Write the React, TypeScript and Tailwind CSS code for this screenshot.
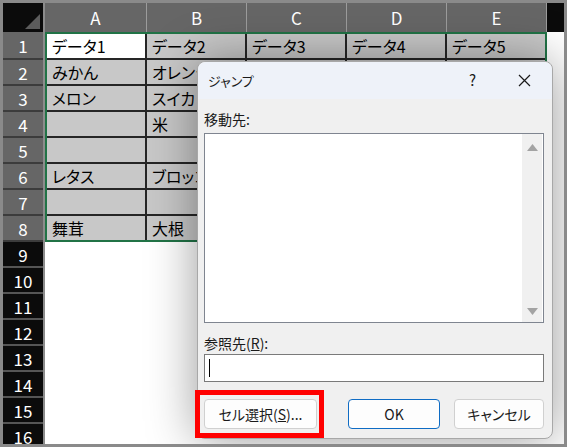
import React from 'react'

const cols = ['A', 'B', 'C', 'D', 'E']
const colWidths = ['w-[102px]', 'w-[100px]', 'w-[100px]', 'w-[100px]', 'w-[100px]']
const cellWidths = ['w-[100px]', 'w-[100px]', 'w-[100px]', 'w-[100px]', 'w-[98px]']

const data: string[][] = [
    ['データ1', 'データ2', 'データ3', 'データ4', 'データ5'],
    ['みかん', 'オレンジ', '', '', ''],
    ['メロン', 'スイカ', '', '', ''],
    ['', '米', '', '', ''],
    ['', '', '', '', ''],
    ['レタス', 'ブロッコリー', '', '', ''],
    ['', '', '', '', ''],
    ['舞茸', '大根', '', '', ''],
]

const rowHeaderHeights = ['h-[28px]', 'h-[26px]', 'h-[26px]', 'h-[26px]', 'h-[26px]', 'h-[26px]', 'h-[26px]', 'h-[26px]']

function Arrow({ down }: { down?: boolean }) {
    return (
        <svg width="11" height="7" viewBox="0 0 11 7">
            {down ? <polygon points="0,0 11,0 5.5,7" fill="#a3a3a3" /> : <polygon points="0,7 11,7 5.5,0" fill="#a3a3a3" />}
        </svg>
    )
}

export default function App() {
    return (
        <div className="w-[567px] h-[447px] bg-[#8a8a8a] p-[3px] font-['Noto_Sans_CJK_JP','Noto_Sans',sans-serif] [font-feature-settings:'palt']">
            <div className="relative w-full h-full overflow-hidden bg-white">
                {/* column headers */}
                <div className="flex h-[29px] bg-[#0b0b0b]">
                    <div className="w-[40px] h-full flex items-end justify-end p-[3px]">
                        <svg width="15" height="15" viewBox="0 0 15 15">
                            <polygon points="15,0 15,15 0,15" fill="#5c5c5c" />
                        </svg>
                    </div>
                    <div className="w-[2px] h-full bg-[#8c8c8c]" />
                    {cols.map((c, i) => (
                        <div
                            key={c}
                            className={`${colWidths[i]} h-full bg-[#666666] border-r border-[#9c9c9c] flex items-center justify-center text-white text-[17px] leading-none`}
                        >
                            {c}
                        </div>
                    ))}
                </div>

                <div className="flex">
                    {/* row headers */}
                    <div className="w-[42px] flex flex-col border-r-2 border-[#8c8c8c]">
                        {rowHeaderHeights.map((h, i) => (
                            <div
                                key={i}
                                className={`${h} bg-[#666666] border-b-2 border-[#3c3c3c] flex items-center justify-center text-white text-[17px] leading-none`}
                            >
                                {i + 1}
                            </div>
                        ))}
                        {[9, 10, 11, 12, 13, 14, 15, 16].map((n) => (
                            <div
                                key={n}
                                className="h-[26px] bg-[#0b0b0b] border-b-2 border-[#555555] flex items-center justify-center text-white text-[17px] leading-none"
                            >
                                {n}
                            </div>
                        ))}
                    </div>

                    {/* selected range */}
                    <div className="flex-1">
                        <div className="w-[502px] border-2 border-[#217346] flex flex-col">
                            {data.map((row, r) => (
                                <div key={r} className={`flex ${r < 7 ? 'h-[26px] border-b-2 border-[#262626]' : 'h-[24px]'}`}>
                                    {row.map((v, c) => (
                                        <div
                                            key={c}
                                            className={`${cellWidths[c]} h-full overflow-hidden whitespace-nowrap pl-[5px] flex items-center text-[16px] leading-none text-black ${c < 4 ? 'border-r-2 border-[#262626]' : ''} ${r === 0 && c === 0 ? 'bg-white' : 'bg-[#c8c8c8]'}`}
                                        >
                                            {v}
                                        </div>
                                    ))}
                                </div>
                            ))}
                        </div>
                    </div>
                </div>

                {/* jump dialog */}
                <div className="absolute left-[194px] top-[58px] w-[356px] h-[378px] rounded-[8px] border border-[#a8a8a8] bg-[#f0f0f0] shadow-[0_0_50px_rgba(0,0,0,0.4)] flex flex-col text-[#1a1a1a]">
                    <div className="h-[37px] shrink-0 rounded-t-[8px] bg-[#eef2f9] flex items-center pl-[10px] pr-[21px] text-[13px]">
                        <span>ジャンプ</span>
                        <span className="ml-auto mr-[42px] text-[15px]">?</span>
                        <svg width="13" height="13" viewBox="0 0 13 13">
                            <path d="M1 1 L12 12 M12 1 L1 12" stroke="#1a1a1a" strokeWidth="1.2" />
                        </svg>
                    </div>

                    <div className="flex flex-col pl-[6px] pr-[8px]">
                        <div className="mt-[10px] h-[20px] text-[14px] leading-[20px]">移動先:</div>
                        <div className="mt-[4px] h-[190px] border border-[#7f8590] bg-white flex">
                            <div className="flex-1" />
                            <div className="w-[20px] mr-[1px] bg-[#f0f0f0] flex flex-col items-center justify-between pt-[10px] pb-[7px]">
                                <Arrow />
                                <Arrow down />
                            </div>
                        </div>
                        <div className="mt-[10px] h-[20px] text-[14px] leading-[20px]">
                            参照先(<span className="underline">R</span>):
                        </div>
                        <div className="mt-[1px] h-[28px] border border-[#7a7a7a] bg-white flex items-center pl-[4px]">
                            <div className="w-[1px] h-[18px] bg-black" />
                        </div>
                        <div className="mt-[17px] h-[30px] flex text-[14px]">
                            <div className="relative">
                                <button className="w-[113px] h-[30px] rounded-[4px] border border-[#d0d0d0] bg-[#fdfdfd]">
                                    セル選択(<span className="underline">S</span>)...
                                </button>
                                <div className="absolute -left-[9px] -top-[9px] -right-[7px] -bottom-[9px] border-[5px] border-[#ff0000]" />
                            </div>
                            <button className="ml-[31px] w-[92px] h-[30px] rounded-[4px] border-[1.5px] border-[#0f6cc4] bg-[#fdfdfd]">
                                OK
                            </button>
                            <button className="ml-[14px] w-[90px] h-[30px] rounded-[4px] border border-[#d0d0d0] bg-[#fdfdfd]">
                                キャンセル
                            </button>
                        </div>
                    </div>
                </div>
            </div>
        </div>
    )
}
